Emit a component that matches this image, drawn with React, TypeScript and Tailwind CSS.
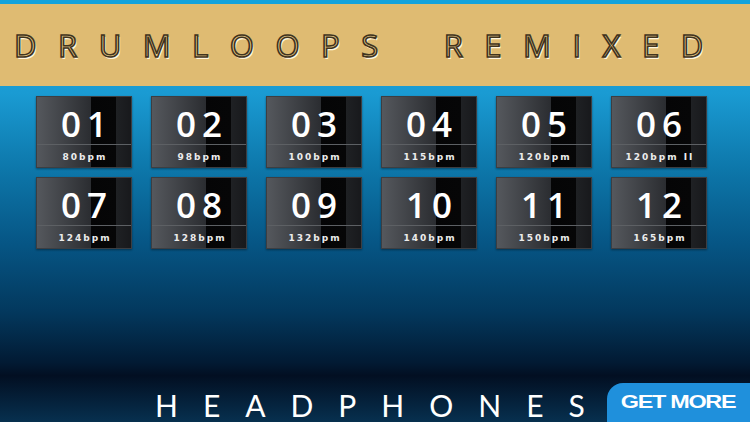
const loops = [
  { n: "01", bpm: "80bpm" },
  { n: "02", bpm: "98bpm" },
  { n: "03", bpm: "100bpm" },
  { n: "04", bpm: "115bpm" },
  { n: "05", bpm: "120bpm" },
  { n: "06", bpm: "120bpm II" },
  { n: "07", bpm: "124bpm" },
  { n: "08", bpm: "128bpm" },
  { n: "09", bpm: "132bpm" },
  { n: "10", bpm: "140bpm" },
  { n: "11", bpm: "150bpm" },
  { n: "12", bpm: "165bpm" },
];

function LoopTile({ n, bpm }: { n: string; bpm: string }) {
  return (
    <button className="w-[96px] h-[72px] flex flex-col border border-[#3c3e42] bg-[linear-gradient(to_right,#55585d_0%,#2b2d31_57%,#050506_57%,#060607_84%,#1f2124_84%,#18191c_100%)] shadow-[0_1px_2px_rgba(0,0,0,0.4)]">
      <div className="h-[47px] w-full flex items-center justify-center pt-[5px] pl-[6px] text-white text-[35px] leading-none tracking-[6px] font-semibold font-['Open_Sans',sans-serif]">
        {n}
      </div>
      <div className="h-px w-full bg-[#5d6064]" />
      <div className="flex-1 w-full flex items-center justify-center pt-[3px] pl-[2px] text-[#ececec] text-[9px] leading-none tracking-[2px] font-bold font-['DejaVu_Sans',sans-serif]">
        {bpm}
      </div>
    </button>
  );
}

export default function App() {
  return (
    <div className="w-[750px] h-[422px] overflow-hidden flex flex-col bg-[linear-gradient(to_bottom,#16a2db_0%,#1a9bd3_22%,#0d77aa_40%,#065584_58%,#03385d_74%,#021a33_86%,#020f22_89%,#07304f_100%)]">
      <div className="h-[4px] bg-[#14a3dc]" />
      <header className="h-[82px] bg-[#dfbb72] flex items-center pl-[14px] font-['Open_Sans',sans-serif] text-[31px] leading-none tracking-[21.5px] text-[#e8c985] [-webkit-text-stroke:1.6px_#40331d] [text-shadow:1.5px_1.5px_0_#fff6df]">
        <span>DRUMLOOPS</span>
        <span className="ml-[44px]">REMIXED</span>
      </header>

      <main className="mt-[10px] pl-[36px] grid grid-cols-[repeat(6,96px)] gap-x-[19px] gap-y-[9px]">
        {loops.map((l) => (
          <LoopTile key={l.n} n={l.n} bpm={l.bpm} />
        ))}
      </main>

      <footer className="mt-auto flex items-end pl-[155px]">
        <div className="pb-[2px] mr-[-25px] whitespace-nowrap text-white text-[30px] leading-none tracking-[25px] font-normal font-['Lato',sans-serif]">
          HEADPHONES
        </div>
        <a className="ml-auto shrink-0 w-[143px] h-[39px] rounded-tl-[16px] bg-[#1f90dc] flex items-center justify-center">
          <span className="inline-block scale-x-[1.3] text-white text-[18px] font-bold tracking-[-1px] font-['Liberation_Sans',Arial,sans-serif]">
            GET MORE
          </span>
        </a>
      </footer>
    </div>
  );
}
